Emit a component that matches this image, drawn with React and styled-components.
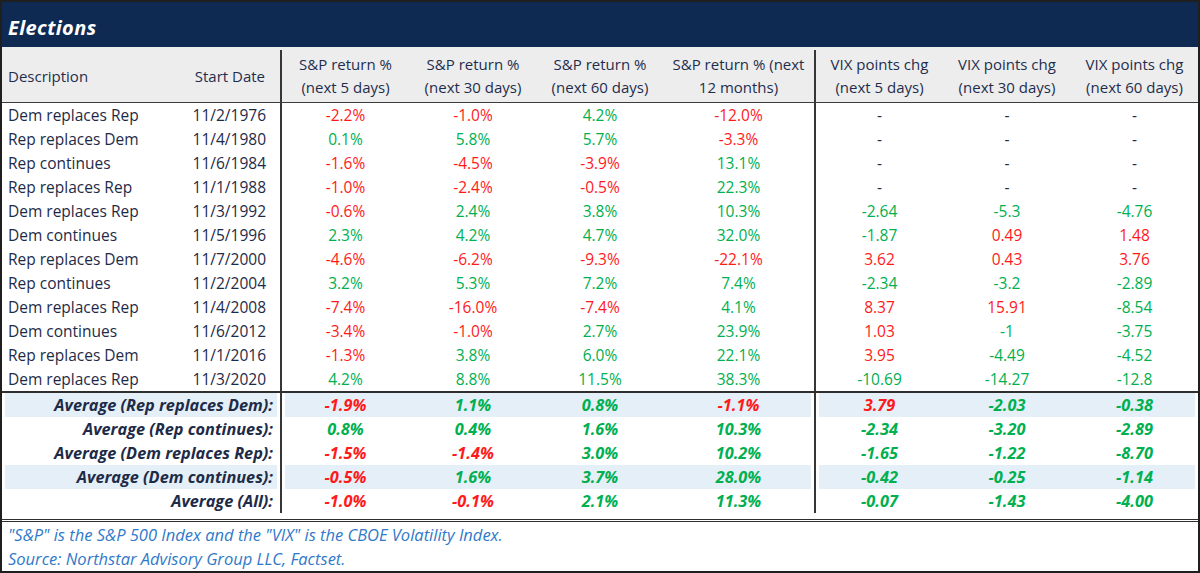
import React from "react";
import styled, { createGlobalStyle, css } from "styled-components";

const Global = createGlobalStyle`
  html, body { margin: 0; padding: 0; background: #fff; }
  body { font-family: "Open Sans", "Liberation Sans", sans-serif; }
  * { box-sizing: border-box; }
`;

const COLS = "176px 102px 129px 128px 126px 151px 129px 128px 127px";
const INK = "#1e2b47";
const RED = "#ff1a1a";
const GREEN = "#00b050";
const SHADE = "#e5eff8";

const Frame = styled.div`
  width: 1200px;
  height: 573px;
  border: 2px solid #1f1f1f;
  display: flex;
  flex-direction: column;
  overflow: hidden;
`;

const TitleBar = styled.div`
  height: 45px;
  flex: none;
  background: #0e2a52;
  display: flex;
  align-items: center;
  padding: 5px 0 0 6px;
`;

const Title = styled.h1`
  margin: 0;
  color: #fff;
  font-size: 20px;
  font-weight: 700;
  font-style: italic;
  letter-spacing: 0.4px;
`;

const Row = styled.div`
  display: grid;
  grid-template-columns: ${COLS};
  height: ${(p) => p.$h || 24}px;
  flex: none;
`;

const HeaderRow = styled(Row)`
  background: #ededed;
  border-bottom: 1px solid #3c3c3c;
  padding-top: 3px;
`;

const Cell = styled.div`
  display: flex;
  align-items: center;
  justify-content: ${(p) =>
    p.$align === "left" ? "flex-start" : p.$align === "right" ? "flex-end" : "center"};
  padding: ${(p) =>
    p.$align === "left" ? "0 0 0 6px" : p.$align === "right" ? `0 ${p.$pr ?? 7}px 0 0` : "0"};
  font-size: 15.5px;
  line-height: 24px;
  color: ${(p) => p.$color || INK};
  white-space: nowrap;
  ${(p) => p.$span && css`grid-column: span ${p.$span};`}
  ${(p) => p.$divider && css`border-left: 2px solid #363636;`}
  ${(p) =>
    p.$shade &&
    css`
      background: ${SHADE};
      box-shadow: ${[
        p.$gapL ? "inset 3px 0 0 #fff" : null,
        p.$gapR ? "inset -3px 0 0 #fff" : null,
      ]
        .filter(Boolean)
        .join(", ") || "none"};
    `}
`;

const HeadCell = styled(Cell)`
  text-align: center;
  font-size: 15px;
  line-height: 23px;
  white-space: normal;
  color: #1f2d4d;
`;

const BoldCell = styled(Cell)`
  font-size: 16.3px;
  font-weight: 700;
  font-style: italic;
`;

const Body = styled.div`
  display: flex;
  flex-direction: column;
`;

const AvgBlock = styled.div`
  display: flex;
  flex-direction: column;
  border-top: 2px solid #2e2e2e;
  border-bottom: 3px double #2e2e2e;
  padding-bottom: 6px;
`;

const Notes = styled.div`
  flex: 1;
  padding: 0 0 0 6px;
  display: flex;
  flex-direction: column;
  justify-content: center;
`;

const Note = styled.p`
  margin: 0;
  font-size: 16.5px;
  line-height: 24px;
  font-style: italic;
  color: #2f79c9;
`;

const data = [
  ["Dem replaces Rep", "11/2/1976", "-2.2%", "-1.0%", "4.2%", "-12.0%", "-", "-", "-"],
  ["Rep replaces Dem", "11/4/1980", "0.1%", "5.8%", "5.7%", "-3.3%", "-", "-", "-"],
  ["Rep continues", "11/6/1984", "-1.6%", "-4.5%", "-3.9%", "13.1%", "-", "-", "-"],
  ["Rep replaces Rep", "11/1/1988", "-1.0%", "-2.4%", "-0.5%", "22.3%", "-", "-", "-"],
  ["Dem replaces Rep", "11/3/1992", "-0.6%", "2.4%", "3.8%", "10.3%", "-2.64", "-5.3", "-4.76"],
  ["Dem continues", "11/5/1996", "2.3%", "4.2%", "4.7%", "32.0%", "-1.87", "0.49", "1.48"],
  ["Rep replaces Dem", "11/7/2000", "-4.6%", "-6.2%", "-9.3%", "-22.1%", "3.62", "0.43", "3.76"],
  ["Rep continues", "11/2/2004", "3.2%", "5.3%", "7.2%", "7.4%", "-2.34", "-3.2", "-2.89"],
  ["Dem replaces Rep", "11/4/2008", "-7.4%", "-16.0%", "-7.4%", "4.1%", "8.37", "15.91", "-8.54"],
  ["Dem continues", "11/6/2012", "-3.4%", "-1.0%", "2.7%", "23.9%", "1.03", "-1", "-3.75"],
  ["Rep replaces Dem", "11/1/2016", "-1.3%", "3.8%", "6.0%", "22.1%", "3.95", "-4.49", "-4.52"],
  ["Dem replaces Rep", "11/3/2020", "4.2%", "8.8%", "11.5%", "38.3%", "-10.69", "-14.27", "-12.8"],
];

const averages = [
  ["Average (Rep replaces Dem):", "-1.9%", "1.1%", "0.8%", "-1.1%", "3.79", "-2.03", "-0.38"],
  ["Average (Rep continues):", "0.8%", "0.4%", "1.6%", "10.3%", "-2.34", "-3.20", "-2.89"],
  ["Average (Dem replaces Rep):", "-1.5%", "-1.4%", "3.0%", "10.2%", "-1.65", "-1.22", "-8.70"],
  ["Average (Dem continues):", "-0.5%", "1.6%", "3.7%", "28.0%", "-0.42", "-0.25", "-1.14"],
  ["Average (All):", "-1.0%", "-0.1%", "2.1%", "11.3%", "-0.07", "-1.43", "-4.00"],
];

const headers = [
  ["S&P return %", "(next 5 days)"],
  ["S&P return %", "(next 30 days)"],
  ["S&P return %", "(next 60 days)"],
  ["S&P return % (next", "12 months)"],
  ["VIX points chg", "(next 5 days)"],
  ["VIX points chg", "(next 30 days)"],
  ["VIX points chg", "(next 60 days)"],
];

// S&P: negative is bad (red). VIX: positive is bad (red).
const colorFor = (v, isVix) => {
  if (v === "-") return INK;
  const neg = v.startsWith("-");
  if (isVix) return neg ? GREEN : RED;
  return neg ? RED : GREEN;
};

export default function App() {
  return (
    <>
      <Global />
      <Frame>
        <TitleBar>
          <Title>Elections</Title>
        </TitleBar>
        <HeaderRow $h={56}>
          <HeadCell $align="left">Description</HeadCell>
          <HeadCell $align="right" $pr={15}>Start Date</HeadCell>
          {headers.map((h, i) => (
            <HeadCell key={i} $divider={i === 0 || i === 4}>
              <span>
                {h[0]}
                <br />
                {h[1]}
              </span>
            </HeadCell>
          ))}
        </HeaderRow>
        <Body>
          {data.map((r, ri) => (
            <Row key={ri}>
              <Cell $align="left">{r[0]}</Cell>
              <Cell $align="right" $pr={14}>{r[1]}</Cell>
              {r.slice(2).map((v, i) => (
                <Cell key={i} $divider={i === 0 || i === 4} $color={colorFor(v, i >= 4)}>
                  {v}
                </Cell>
              ))}
            </Row>
          ))}
        </Body>
        <AvgBlock>
          {averages.map((r, ri) => {
            const shade = ri === 0 || ri === 3;
            return (
              <Row key={ri}>
                <BoldCell $span={2} $align="right" $shade={shade} $gapL $gapR>
                  {r[0]}
                </BoldCell>
                {r.slice(1).map((v, i) => (
                  <BoldCell
                    key={i}
                    $shade={shade}
                    $divider={i === 0 || i === 4}
                    $gapL={i === 0 || i === 4}
                    $gapR={i === 3 || i === 6}
                    $color={colorFor(v, i >= 4)}
                  >
                    {v}
                  </BoldCell>
                ))}
              </Row>
            );
          })}
        </AvgBlock>
        <Notes>
          <Note>"S&amp;P" is the S&amp;P 500 Index and the "VIX" is the CBOE Volatility Index.</Note>
          <Note>Source: Northstar Advisory Group LLC, Factset.</Note>
        </Notes>
      </Frame>
    </>
  );
}
